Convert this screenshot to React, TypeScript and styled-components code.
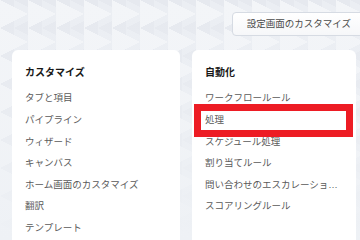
import React from "react";
import styled, { createGlobalStyle } from "styled-components";

const GlobalStyle = createGlobalStyle`
  html, body {
    margin: 0;
    padding: 0;
    width: 360px;
    height: 240px;
    overflow: hidden;
    background: #eef1f5;
  }
  * {
    box-sizing: border-box;
  }
`;

const Page = styled.div`
  width: 360px;
  height: 240px;
  overflow: hidden;
  font-family: "Liberation Sans", "Noto Sans CJK JP", sans-serif;
  background-color: #ebeef3;
  background-image:
    linear-gradient(180deg, rgba(238, 241, 245, 0) 0%, rgba(238, 241, 245, 0.3) 40%, #eef1f5 100%),
    conic-gradient(at 100% 50%, transparent 0 243.4deg, #f3f5f8 243.4deg 296.6deg, transparent 296.6deg),
    conic-gradient(at 0% 50%, transparent 0 63.4deg, #e6e9ef 63.4deg 116.6deg, transparent 116.6deg);
  background-size: 100% 100%, 28px 28px, 28px 28px;
  background-position: 0 0, 0 0, 14px 14px;
`;

const Header = styled.div`
  display: flex;
  justify-content: flex-end;
  padding: 12px 0 0 12px;
  height: 50px;
`;

const HeaderButton = styled.button`
  flex-shrink: 0;
  height: 24px;
  margin-right: -6px;
  padding: 0 14px;
  border: 1px solid #d6dbe3;
  border-radius: 4px;
  background: linear-gradient(180deg, #ffffff 0%, #f6f7f9 100%);
  color: #4a4a4a;
  font-family: inherit;
  font-size: 9.5px;
  line-height: 22px;
  white-space: nowrap;
`;

const Columns = styled.div`
  display: grid;
  grid-template-columns: 168px 164px;
  gap: 12px;
  padding: 0 0 0 12px;
`;

const Card = styled.section`
  height: 200px;
  padding: 16px 13px 0 13px;
  background: #ffffff;
  border-radius: 6px;
`;

const CardTitle = styled.h2`
  margin: 0 0 7.2px 0;
  font-size: 10px;
  line-height: 14px;
  font-weight: 700;
  color: #181818;
`;

const LinkList = styled.ul`
  list-style: none;
  margin: 0;
  padding: 0;
`;

const LinkItem = styled.li`
  position: relative;
  height: 21.67px;
  font-size: 9.5px;
  line-height: 21.67px;
  color: #5a5a5a;
  white-space: nowrap;
`;

const LinkText = styled.span`
  display: block;
  overflow: hidden;
  text-overflow: ellipsis;
`;

const Highlight = styled.span`
  position: absolute;
  top: -4.8px;
  left: -11px;
  right: -10px;
  height: 33px;
  border: 7px solid #ed1c24;
  pointer-events: none;
`;

interface ISection {
  title: string;
  items: string[];
  highlighted?: string;
}

const sections: ISection[] = [
  {
    title: "カスタマイズ",
    items: [
      "タブと項目",
      "パイプライン",
      "ウィザード",
      "キャンバス",
      "ホーム画面のカスタマイズ",
      "翻訳",
      "テンプレート",
    ],
  },
  {
    title: "自動化",
    items: [
      "ワークフロールール",
      "処理",
      "スケジュール処理",
      "割り当てルール",
      "問い合わせのエスカレーションルール",
      "スコアリングルール",
    ],
    highlighted: "処理",
  },
];

const SetupSection: React.FC<ISection> = ({ title, items, highlighted }) => (
  <Card>
    <CardTitle>{title}</CardTitle>
    <LinkList>
      {items.map((item) => (
        <LinkItem key={item}>
          <LinkText>{item}</LinkText>
          {item === highlighted ? <Highlight /> : null}
        </LinkItem>
      ))}
    </LinkList>
  </Card>
);

export default function App() {
  return (
    <>
      <GlobalStyle />
      <Page>
        <Header>
          <HeaderButton>設定画面のカスタマイズ</HeaderButton>
        </Header>
        <Columns>
          {sections.map((section) => (
            <SetupSection key={section.title} {...section} />
          ))}
        </Columns>
      </Page>
    </>
  );
}
